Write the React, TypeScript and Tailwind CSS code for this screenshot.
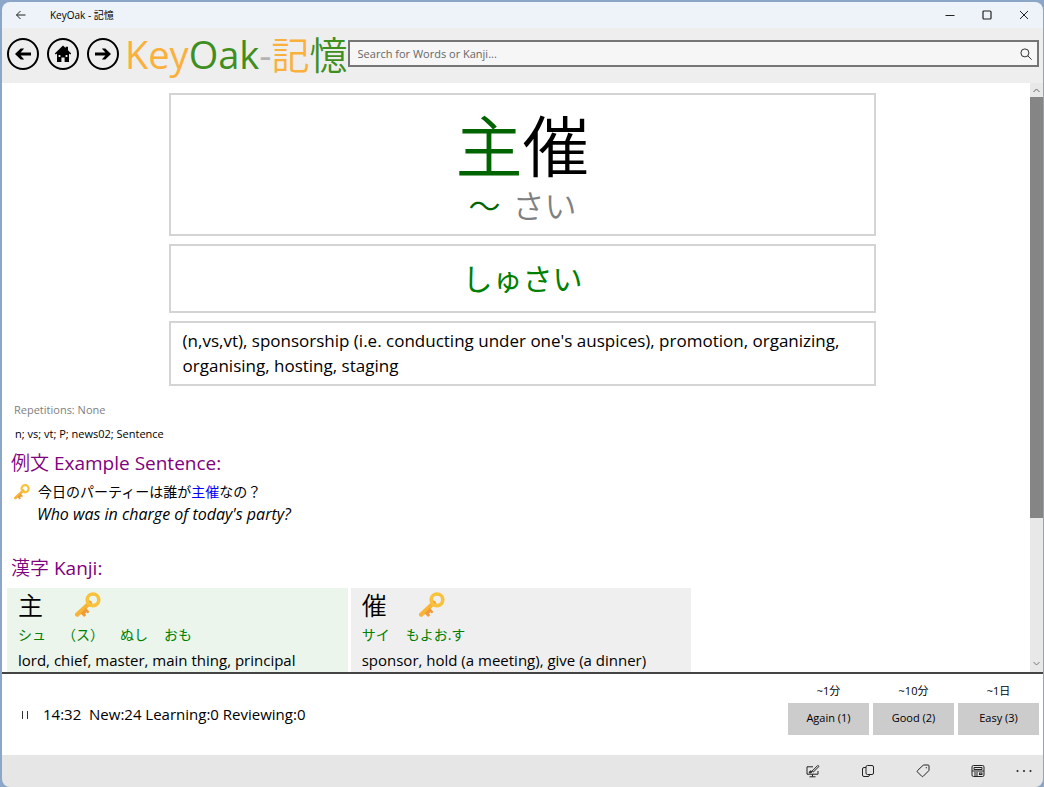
import { FC, ReactNode } from 'react';

type IconButtonProps = {
	label: string;
	className?: string;
	children: ReactNode;
};

type KanjiProps = {
	kanji: string;
	readings: string[];
	meaning: string;
	learned?: boolean;
};

const answers = [
	{ interval: '~1分', label: 'Again (1)' },
	{ interval: '~10分', label: 'Good (2)' },
	{ interval: '~1日', label: 'Easy (3)' },
];

const IconButton: FC<IconButtonProps> = ({ label, className = '', children }) => (
	<button aria-label={label} className={`flex items-center justify-center ${className}`}>
		{children}
	</button>
);

const RoundButton: FC<IconButtonProps> = ({ label, children }) => (
	<IconButton label={label} className="size-8 shrink-0 rounded-full border-2 border-black text-black">
		<svg viewBox="0 0 20 20" className="size-5" fill="currentColor">
			{children}
		</svg>
	</IconButton>
);

const KeyIcon: FC<{ className: string }> = ({ className }) => (
	<svg viewBox="0 0 26 26" className={className} fill="none">
		<path d="M14.8 10.8 2.2 22.6" stroke="#f8b436" strokeWidth="4.4" strokeLinecap="round" />
		<path d="m5.6 21.4 3.6 3.6 2-2-1.2-1.3 1.5-1.4 1.2 1.2 1.7-1.8-3.4-3.8Z" fill="#f19a38" />
		<path d="m13.2 9.2 3.8 3.9" stroke="#f19a38" strokeWidth="2.6" strokeLinecap="round" />
		<circle cx="18" cy="7.8" r="5.8" stroke="#f9c23c" strokeWidth="3.6" />
	</svg>
);

const Card: FC<{ className?: string; children: ReactNode }> = ({ className = '', children }) => (
	<section className={`border-2 border-[#d4d4d4] ${className}`}>{children}</section>
);

const KanjiCard: FC<KanjiProps> = ({ kanji, readings, meaning, learned }) => (
	<article className={`h-24 px-[11px] ${learned ? 'bg-[#ebf5eb]' : 'bg-[#efefef]'}`}>
		<div className="flex h-[34px] items-center gap-8">
			<span className="text-[25px] leading-none font-[350]">{kanji}</span>
			<KeyIcon className="size-[26px]" />
		</div>
		<div className="flex h-[26px] items-center gap-4 text-sm text-[#008000]">
			{readings.map((reading) => (
				<span key={reading}>{reading}</span>
			))}
		</div>
		<p className="text-[15px] leading-6">{meaning}</p>
	</article>
);

const TitleBar: FC = () => (
	<header className="flex h-[26px] shrink-0 items-center bg-[#edf3f8] pr-px">
		<IconButton label="Back" className="h-full w-[38px]">
			<svg viewBox="0 0 10 10" className="size-[10px]" fill="none" stroke="#222">
				<path d="M9.5 5h-9M4.5 1l-4 4 4 4" />
			</svg>
		</IconButton>
		<span className="pl-2.5 text-[10px]">KeyOak - 記憶</span>
		<div className="ml-auto flex h-full">
			<IconButton label="Minimize" className="w-[37px]">
				<svg viewBox="0 0 10 10" className="size-[10px]" stroke="#222">
					<path d="M.5 5.5h9" />
				</svg>
			</IconButton>
			<IconButton label="Maximize" className="w-[37px]">
				<svg viewBox="0 0 10 10" className="size-[10px]" fill="none" stroke="#222">
					<rect x="1" y="1" width="8" height="8" rx="1" strokeWidth="1.2" />
				</svg>
			</IconButton>
			<IconButton label="Close" className="w-[37px]">
				<svg viewBox="0 0 10 10" className="size-[10px]" stroke="#222">
					<path d="m1 1 8 8M9 1 1 9" />
				</svg>
			</IconButton>
		</div>
	</header>
);

const Toolbar: FC = () => (
	<nav className="flex h-[55px] shrink-0 items-center bg-[#eeeeee] pr-1 pb-1 pl-[5px]">
		<div className="flex gap-2">
			<RoundButton label="Previous">
				<path d="M18 8.6v2.8H7.6l3.6 4.2H7.7L2 10l5.7-5.6h3.5L7.6 8.6Z" />
			</RoundButton>
			<RoundButton label="Home">
				<path d="M10 1.6 1.8 9.4l1 1L4 9.6V18h4.4v-4.6h3.2V18H16V9.6l1.2.8 1-1L15 6.2V2.8h-2.4V4Z" />
				<path d="M5.6 11h1.8v2H5.6ZM12.6 11h1.8v2h-1.8Z" fill="#eee" />
			</RoundButton>
			<RoundButton label="Next">
				<path d="M2 8.6v2.8h10.4l-3.6 4.2h3.5L18 10l-5.7-5.6H8.8l3.6 4.2Z" />
			</RoundButton>
		</div>
		<h1 className="pl-1.5 text-[38px] leading-none font-normal whitespace-nowrap text-[#fbb03b]">
			Key<span className="text-[#3f8f1f]">Oak</span>
			<span className="text-[#b3b3b3]">-</span>
			<span className="font-[350]">
				記<span className="text-[#3f8f1f]">憶</span>
			</span>
		</h1>
		<div className="flex h-[27px] min-w-0 flex-1 items-center border-2 border-[#757575] bg-[#f6f6f6]">
			<input
				type="text"
				aria-label="Search"
				placeholder="Search for Words or Kanji..."
				className="h-full min-w-0 flex-1 bg-transparent px-2 text-[11px] outline-none placeholder:text-[#666]"
			/>
			<IconButton label="Search" className="h-full w-[22px]">
				<svg viewBox="0 0 12 12" className="size-3" fill="none" stroke="#333">
					<circle cx="4.9" cy="4.9" r="4" />
					<path d="m7.8 7.8 3.8 3.8" />
				</svg>
			</IconButton>
		</div>
	</nav>
);

const ScrollBar: FC = () => (
	<div className="absolute inset-y-0 right-0 flex w-[13px] flex-col items-center bg-[#e8e8e8] pb-1">
		<svg viewBox="0 0 13 14" className="h-3.5 w-[13px] shrink-0" fill="none" stroke="#666">
			<path d="m3.5 9 3-3 3 3" />
		</svg>
		<div className="h-[72%] w-full bg-[#858585]" />
		<svg viewBox="0 0 13 8" className="mt-auto h-2 w-[13px] shrink-0" fill="none" stroke="#777">
			<path d="m3.5 2 3 3 3-3" />
		</svg>
	</div>
);

const WordDetails: FC = () => (
	<main className="relative min-h-0 flex-1 overflow-hidden bg-white">
		<div className="mx-auto flex w-[68%] flex-col gap-2 pt-[10px]">
			<Card className="flex flex-col items-center pt-3.5 pb-1.5">
				<div className="text-[67px] leading-[75px] font-[350]">
					<span className="text-[#006400]">主</span>催
				</div>
				<div className="flex gap-3 text-[32px] leading-[44px] text-[#808080]">
					<span className="font-[350] text-[#006400]">～</span>
					<span className="font-[350]">さい</span>
				</div>
			</Card>
			<Card className="py-2 text-center text-[30px] leading-[49px] text-[#008000]">しゅさい</Card>
			<Card className="px-3 pt-[5px] pb-[6px] text-[17px] leading-[25px]">
				(n,vs,vt), sponsorship (i.e. conducting under one's auspices), promotion, organizing,
				organising, hosting, staging
			</Card>
		</div>
		<div className="pl-[5px]">
			<p className="pt-3.5 pl-[7px] text-[11px] leading-5 text-[#808080]">Repetitions: None</p>
			<p className="pt-1 pl-2 text-[11px] leading-5">n; vs; vt; P; news02; Sentence</p>
			<h2 className="pt-px pl-1 text-[19px] leading-9 text-[#800080]">
				<span className="font-[350]">例文</span> Example Sentence:
			</h2>
			<div className="flex items-center gap-2 pl-[7px] text-sm leading-[22px]">
				<KeyIcon className="size-4" />
				<p>
					今日のパーティーは誰が
					<a href="#" className="text-[#0000ff]">
						主催
					</a>
					なの？
				</p>
			</div>
			<p className="pl-[30px] text-base leading-[22px] italic">Who was in charge of today's party?</p>
			<h2 className="pt-6 pl-1 text-[19px] leading-[38px] text-[#800080]">
				<span className="font-[350]">漢字</span> Kanji:
			</h2>
			<div className="grid grid-cols-3 gap-[3px] pt-px pr-2">
				<KanjiCard
					kanji="主"
					readings={['シュ', '（ス）', 'ぬし', 'おも']}
					meaning="lord, chief, master, main thing, principal"
					learned
				/>
				<KanjiCard
					kanji="催"
					readings={['サイ', 'もよお.す']}
					meaning="sponsor, hold (a meeting), give (a dinner)"
				/>
			</div>
		</div>
		<ScrollBar />
	</main>
);

const ReviewBar: FC = () => (
	<section className="flex h-[83px] shrink-0 items-center border-t-2 border-[#444] bg-white pr-1 pl-4">
		<IconButton label="Pause" className="size-3.5">
			<svg viewBox="0 0 10 10" className="size-[10px]" stroke="#333">
				<path d="M2.5 1v8M7.5 1v8" />
			</svg>
		</IconButton>
		<p className="pl-[11px] text-[15px] whitespace-pre">14:32  New:24 Learning:0 Reviewing:0</p>
		<div className="ml-auto flex gap-1">
			{answers.map(({ interval, label }) => (
				<div key={label} className="w-[81px] pb-3 text-center text-[11px]">
					<div className="h-5 leading-4">{interval}</div>
					<button className="h-8 w-full bg-[#cccccc]">{label}</button>
				</div>
			))}
		</div>
	</section>
);

const CommandBar: FC = () => (
	<footer className="flex h-[32px] shrink-0 items-center justify-end bg-[#e6e6e6]">
		<IconButton label="Annotate" className="h-full w-[55px]">
			<svg viewBox="0 0 14 14" className="size-3.5" fill="none" stroke="#222">
				<path d="M7 2.8H1v7.4h11V7M3.5 12.8h6M6.5 10.2v2.4" />
				<path d="M3.2 8.8c.2-1.4 1-2.2 2.2-1.8 1 .8.4 2-2.2 1.8Z" fill="#222" />
				<path d="m6.2 7 5.6-5.6 1.2 1L7.4 8Z" />
			</svg>
		</IconButton>
		<IconButton label="Copy" className="h-full w-[55px]">
			<svg viewBox="0 0 14 14" className="size-3.5" fill="none" stroke="#222">
				<rect x="5" y="1.5" width="7.5" height="9" rx="1.5" />
				<path d="M5 3.5H3A1.5 1.5 0 0 0 1.5 5v6A1.5 1.5 0 0 0 3 12.5h4A1.5 1.5 0 0 0 8.5 11v-.5" />
			</svg>
		</IconButton>
		<IconButton label="Tags" className="h-full w-[55px]">
			<svg viewBox="0 0 14 14" className="size-3.5" fill="none" stroke="#222">
				<path d="M8 1h4.2q.8 0 .8.8V6q0 .5-.4.9l-5.4 5.4q-.7.7-1.4 0L1.5 8q-.7-.7 0-1.4L7 1.4Q7.4 1 8 1Z" />
				<circle cx="10.3" cy="3.7" r=".6" fill="#222" stroke="none" />
			</svg>
		</IconButton>
		<IconButton label="Card view" className="h-full w-[55px]">
			<svg viewBox="0 0 14 14" className="size-3.5" fill="none" stroke="#222">
				<rect x="1" y="1.5" width="12" height="11" rx="1.5" />
				<path d="M3 3.5h8v2H3ZM1 7h12M3 9h4M3 11h4" />
				<rect x="8.5" y="9" width="2.5" height="1.5" />
			</svg>
		</IconButton>
		<IconButton label="More" className="h-full w-[38px]">
			<svg viewBox="0 0 16 4" className="h-1 w-4" fill="#222">
				<circle cx="1.5" cy="2" r="1" />
				<circle cx="8" cy="2" r="1" />
				<circle cx="14.5" cy="2" r="1" />
			</svg>
		</IconButton>
	</footer>
);

export default function App() {
	return (
		<div className="flex h-screen flex-col bg-[#8ba6c6] pt-0.5 pr-px pl-0.5 font-['Open_Sans','Noto_Sans_CJK_JP',sans-serif] text-black">
			<div className="flex min-h-0 flex-1 flex-col overflow-hidden rounded-lg">
				<TitleBar />
				<Toolbar />
				<WordDetails />
				<ReviewBar />
				<CommandBar />
			</div>
		</div>
	);
}
